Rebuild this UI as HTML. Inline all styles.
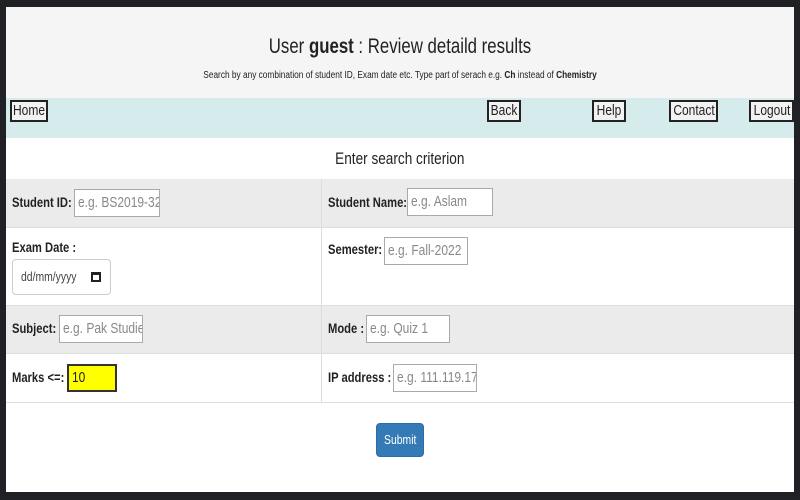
<!DOCTYPE html>
<html><head><style>
*{box-sizing:border-box;margin:0;padding:0}
body{width:800px;height:500px;background:#202124;font-family:"Liberation Sans",sans-serif;color:#222;position:relative;overflow:hidden}
#pg{position:absolute;left:6px;top:7px;width:788px;height:485px;background:#fff}
.abs{position:absolute}
.n{display:inline-block;transform:scaleX(.8);transform-origin:left center;white-space:nowrap}
.nc{display:inline-block;transform:scaleX(.8);transform-origin:center center;white-space:nowrap}
.hdr{left:0;top:0;width:788px;height:91px;background:#f5f5f5;text-align:center}
.hdr h1{font-weight:normal;font-size:21px;position:absolute;top:28px;width:100%}
.hdr p{font-size:10px;position:absolute;top:63px;width:100%}
.nav{left:0;top:91px;width:788px;height:40px;background:#d6ecec}
.nb{position:absolute;top:2px;height:22px;border:2px solid #222;background:#f2f2f2;font-size:15px;line-height:18px}
.nb span{position:absolute;left:50%;top:0;transform:translateX(-50%) scaleX(.8);white-space:nowrap}
.crit{left:0;top:131px;width:788px;height:41px;text-align:center;font-size:17px;line-height:41px}
.row{left:0;width:788px;border-bottom:1px solid #ddd}
.g{background:#ebebeb}
.div{position:absolute;left:315px;top:0;bottom:0;border-left:1px solid #ddd}
.lb{position:absolute;font-weight:bold;font-size:14px}
.in{position:absolute;height:28px;border:1px solid #aaa;background:#fff;font-size:15px;color:#888;line-height:26px;padding-left:3px;white-space:nowrap;overflow:hidden}
</style></head><body><div id="pg">
<div class="abs hdr"><h1><span class="nc">User <b>guest</b> : Review detaild results</span></h1><p><span class="nc" style="transform:scaleX(.83)">Search by any combination of student ID, Exam date etc. Type part of serach e.g. <b>Ch</b> instead of <b>Chemistry</b></span></p></div>
<div class="abs nav">
<div class="nb" style="left:4px;width:38px"><span>Home</span></div>
<div class="nb" style="left:481px;width:34px"><span>Back</span></div>
<div class="nb" style="left:586px;width:34px"><span>Help</span></div>
<div class="nb" style="left:663px;width:49px"><span>Contact</span></div>
<div class="nb" style="left:743px;width:45px"><span>Logout</span></div>
</div>
<div class="abs crit"><span class="nc">Enter search criterion</span></div>
<div class="abs row g" style="top:172px;height:49px"><div class="div"></div>
<span class="lb n" style="left:6px;top:15px">Student ID:</span><div class="in" style="left:68px;top:10px;width:86px"><span class="n">e.g. BS2019-329</span></div>
<span class="lb n" style="left:322px;top:15px">Student Name:</span><div class="in" style="left:401px;top:9px;width:86px"><span class="n">e.g. Aslam</span></div></div>
<div class="abs row" style="top:221px;height:78px"><div class="div"></div>
<span class="lb n" style="left:6px;top:11px">Exam Date :</span>
<div class="in" style="left:6px;top:31px;width:99px;height:36px;border-radius:4px;border-color:#ccc;line-height:34px;color:#444;font-size:13px;padding-left:8px"><span class="n">dd/mm/yyyy</span><span style="position:absolute;left:78px;top:12px;width:10px;height:10px;border:2px solid #222;border-top-width:3px"></span></div>
<span class="lb n" style="left:322px;top:13px">Semester:</span><div class="in" style="left:378px;top:9px;width:84px"><span class="n">e.g. Fall-2022</span></div></div>
<div class="abs row g" style="top:299px;height:48px"><div class="div"></div>
<span class="lb n" style="left:6px;top:14px">Subject:</span><div class="in" style="left:53px;top:9px;width:84px"><span class="n">e.g. Pak Studies</span></div>
<span class="lb n" style="left:322px;top:14px">Mode :</span><div class="in" style="left:360px;top:9px;width:84px"><span class="n">e.g. Quiz 1</span></div></div>
<div class="abs row" style="top:347px;height:49px"><div class="div"></div>
<span class="lb n" style="left:6px;top:15px">Marks &lt;=:</span><div class="in" style="left:61px;top:10px;width:50px;background:#ff0;border:2px solid #333;color:#222;line-height:24px"><span class="n">10</span></div>
<span class="lb n" style="left:322px;top:15px">IP address :</span><div class="in" style="left:387px;top:10px;width:84px"><span class="n">e.g. 111.119.178</span></div></div>
<div class="abs" style="left:370px;top:416px;width:48px;height:34px;background:#337ab7;border:1px solid #2e6da4;border-radius:4px;color:#fff;font-size:13px;line-height:32px;text-align:center"><span class="nc">Submit</span></div>
</div></body></html>
